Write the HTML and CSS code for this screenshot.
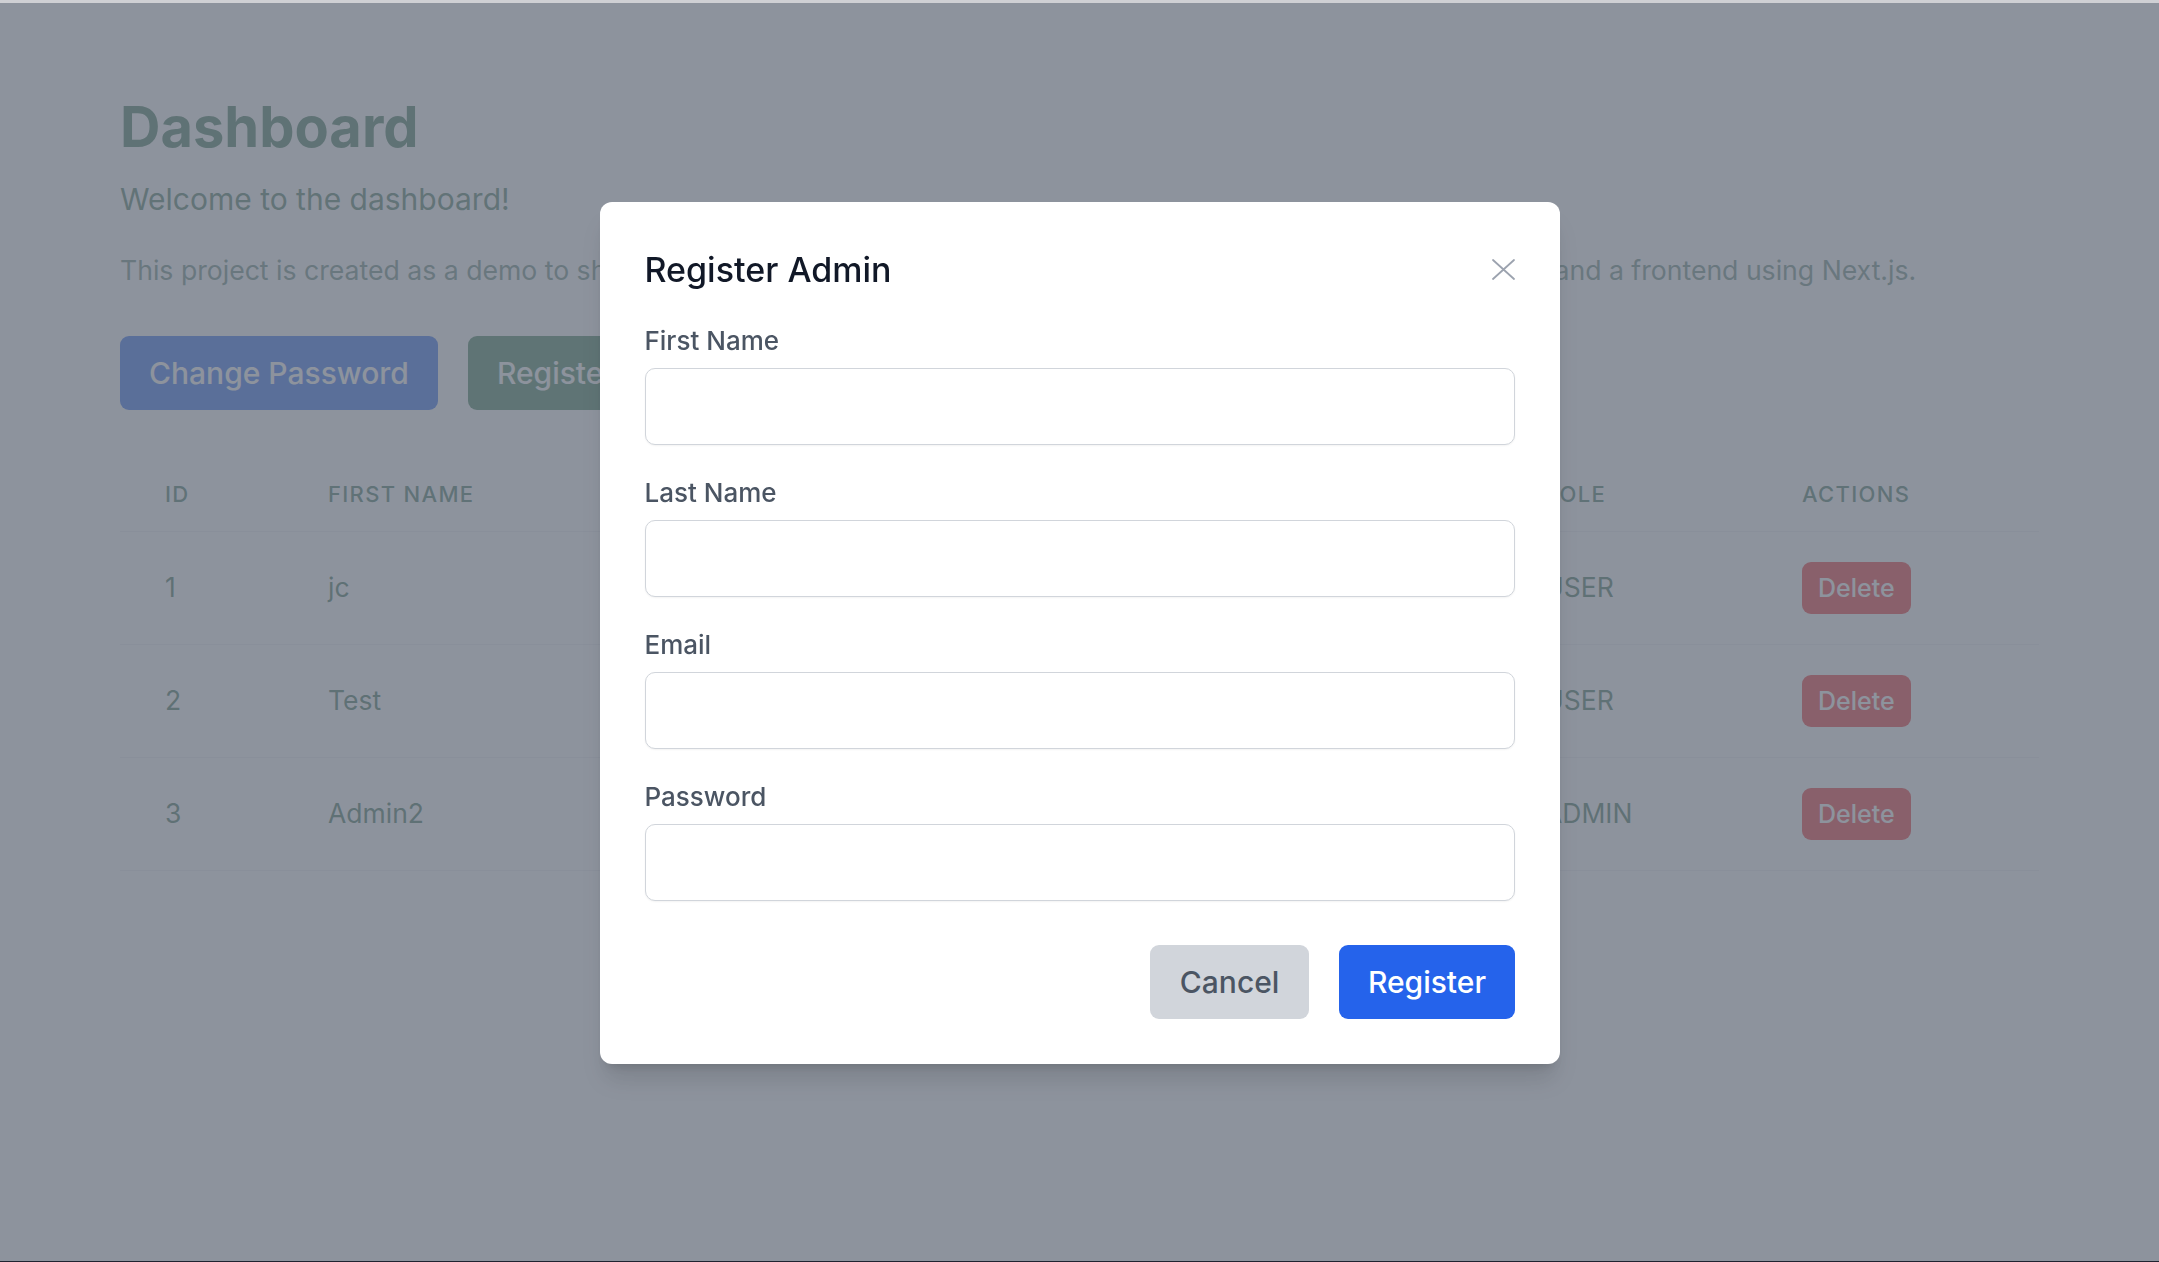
FILE: index.html
```html
<!DOCTYPE html>
<html lang="en">
<head>
<meta charset="utf-8">
<title>Dashboard</title>
<link rel="stylesheet" href="styles.css">
</head>
<body>
<div class="chrome-top"></div>
<main class="page">
  <h1 class="title">Dashboard</h1>
  <p class="welcome">Welcome to the dashboard!</p>
  <p class="intro">This project is created as a demo to show authentication and authorization with a backend built using Spring Boot and a frontend using Next.js.</p>
  <div class="actions">
    <button class="btn btn-blue">Change Password</button>
    <button class="btn btn-green">Register Admin</button>
  </div>
  <table class="users">
    <colgroup>
      <col class="c-id"><col class="c-first"><col class="c-last"><col class="c-email"><col class="c-role"><col class="c-actions">
    </colgroup>
    <thead>
      <tr><th>ID</th><th>First Name</th><th>Last Name</th><th>Email</th><th>Role</th><th>Actions</th></tr>
    </thead>
    <tbody>
      <tr><td>1</td><td>jc</td><td>cruz</td><td>jc@example.com</td><td>USER</td><td><button class="btn-delete">Delete</button></td></tr>
      <tr><td>2</td><td>Test</td><td>User</td><td>test@example.com</td><td>USER</td><td><button class="btn-delete">Delete</button></td></tr>
      <tr><td>3</td><td>Admin2</td><td>Admin</td><td>admin2@example.com</td><td>ADMIN</td><td><button class="btn-delete">Delete</button></td></tr>
    </tbody>
  </table>
</main>

<div class="overlay">
  <div class="modal">
    <div class="modal-head">
      <h2 class="modal-title">Register Admin</h2>
      <button class="close" aria-label="Close">
        <svg width="23" height="21" viewBox="0 0 23 21"><path d="M1 1L22 20M22 1L1 20" stroke="#9ca3af" stroke-width="1.8" fill="none" stroke-linecap="round"/></svg>
      </button>
    </div>
    <form class="form">
      <div class="field"><label class="label">First Name</label><input class="input" type="text"></div>
      <div class="field"><label class="label">Last Name</label><input class="input" type="text"></div>
      <div class="field"><label class="label">Email</label><input class="input" type="email"></div>
      <div class="field"><label class="label">Password</label><input class="input" type="password"></div>
      <div class="modal-foot">
        <button type="button" class="mbtn mbtn-cancel">Cancel</button>
        <button type="button" class="mbtn mbtn-primary">Register</button>
      </div>
    </form>
  </div>
</div>
<div class="chrome-bottom"></div>
</body>
</html>
```

FILE: styles.css
```css
* { box-sizing: border-box; }
html, body { margin: 0; padding: 0; }
body {
  background: #ffffff;
  font-family: Inter, "Noto Sans", "Liberation Sans", sans-serif;
  width: 2159px;
  height: 1262px;
  overflow: hidden;
}
.chrome-top {
  position: fixed; left: 0; right: 0; top: 0; height: 3px;
  background: #cfd0d4; z-index: 20;
}
.chrome-bottom {
  position: fixed; left: 0; right: 0; bottom: 0; height: 1px;
  background: #1f2330; z-index: 20;
}
.page {
  padding: 97px 120px 0 120px;
}
.title {
  margin: 0;
  font-size: 56px;
  line-height: 60px;
  font-weight: 700;
  color: rgb(59, 113, 82);
}
.welcome {
  margin: 21px 0 0 0;
  font-size: 30px;
  line-height: 42px;
  color: rgb(70, 118, 92);
}
.intro {
  margin: 30px 0 0 0;
  font-size: 26.62px;
  line-height: 40.5px;
  color: rgb(100, 135, 122);
  white-space: nowrap;
}
.actions {
  margin-top: 45px;
  display: flex;
  gap: 30px;
}
.btn {
  border: 0;
  font-family: inherit;
  font-size: 30px;
  line-height: 42px;
  font-weight: 500;
  padding: 16px 29px;
  border-radius: 9px;
  color: #ffffff;
}
.btn-blue { background: #2563eb; }
.btn-green { background: rgb(59, 122, 84); }

.users {
  margin-top: 47px;
  width: 1919px;
  border-collapse: collapse;
  table-layout: fixed;
}
.c-id { width: 163px; }
.c-first { width: 370px; }
.c-last { width: 330px; }
.c-email { width: 516px; }
.c-role { width: 258px; }
.c-actions { width: 282px; }
.users th {
  text-align: left;
  font-size: 22px;
  line-height: 30px;
  font-weight: 500;
  letter-spacing: 0.06em;
  text-transform: uppercase;
  color: rgb(62, 112, 92);
  padding: 22px 45px 22px 45px;
  border-bottom: 1px solid #eceef1;
}
.users td {
  font-size: 26.5px;
  line-height: 40px;
  color: rgb(59, 108, 84);
  padding: 30px 45px;
  vertical-align: baseline;
  white-space: nowrap;
  overflow: hidden;
}
.users tbody tr { border-bottom: 1px solid #eceef1; background: #ffffff; }
.btn-delete {
  border: 0;
  font-family: inherit;
  font-size: 25px;
  line-height: 36px;
  font-weight: 500;
  padding: 8px 16px;
  border-radius: 9px;
  background: rgb(236, 38, 40);
  color: #ffffff;
}

.overlay {
  position: fixed;
  left: 0; right: 0; top: 3px; bottom: 1px;
  padding-top: 1px;
  background: rgba(107, 114, 128, 0.77);
  display: flex;
  align-items: center;
  justify-content: center;
  z-index: 10;
}
.modal {
  width: 960px;
  background: #ffffff;
  border-radius: 12px;
  padding: 45px;
  box-shadow: 0 20px 25px -5px rgba(0,0,0,0.12), 0 8px 10px -6px rgba(0,0,0,0.12);
}
.modal-head {
  display: flex;
  justify-content: space-between;
  align-items: center;
}
.modal-title {
  margin: 0;
  font-size: 34px;
  line-height: 45px;
  font-weight: 500;
  color: #111827;
}
.close {
  border: 0;
  background: transparent;
  padding: 0;
  width: 23px;
  height: 21px;
  display: flex;
}
.form {
  margin: 31px 0 0 0;
  display: flex;
  flex-direction: column;
  gap: 30px;
}
.field { display: flex; flex-direction: column; }
.label {
  font-size: 26px;
  line-height: 36px;
  font-weight: 500;
  color: #4b5563;
  margin-bottom: 9px;
}
.input {
  height: 77px;
  width: 100%;
  border: 1.5px solid #d1d5db;
  border-radius: 10px;
  background: #ffffff;
  box-shadow: 0 1px 2px rgba(0,0,0,0.05);
  font-family: inherit;
  font-size: 24px;
  padding: 0 18px;
}
.modal-foot {
  margin-top: 14px;
  display: flex;
  justify-content: flex-end;
  gap: 30px;
}
.mbtn {
  border: 0;
  font-family: inherit;
  font-size: 30px;
  line-height: 42px;
  font-weight: 500;
  padding: 16px 30px;
  border-radius: 9px;
}
.mbtn-cancel { background: #d1d5db; color: #4b5563; }
.mbtn-primary { background: #2563eb; color: #ffffff; padding: 16px 28.5px; }
```
